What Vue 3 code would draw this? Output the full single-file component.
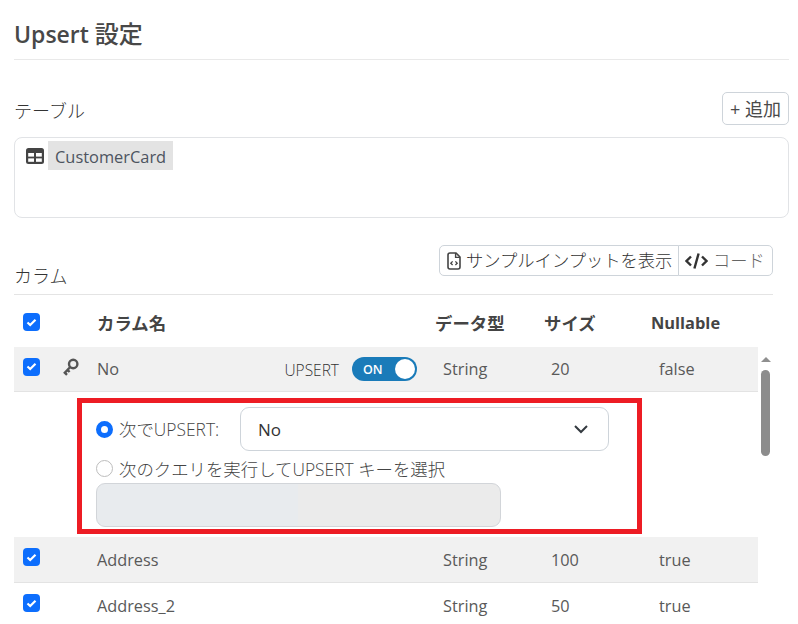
<script setup>
const after = [
  { name: 'Address', type: 'String', size: '100', nullable: 'true', shaded: true },
  { name: 'Address_2', type: 'String', size: '50', nullable: 'true', shaded: false },
]
</script>

<template>
  <main class="page">
    <h1 class="title">Upsert <span class="title-ja">設定</span></h1>

    <section class="table-section">
      <div class="section-head">
        <span class="label">テーブル</span>
        <button class="btn add">+ 追加</button>
      </div>
      <div class="table-box">
        <svg class="table-icon" width="18" height="16" viewBox="0 0 18 16">
          <rect x="0" y="0" width="18" height="16" rx="2.5" fill="#444" />
          <rect x="2.2" y="5" width="5.8" height="3.6" fill="#fff" />
          <rect x="10" y="5" width="5.8" height="3.6" fill="#fff" />
          <rect x="2.2" y="10.4" width="5.8" height="3.4" fill="#fff" />
          <rect x="10" y="10.4" width="5.8" height="3.4" fill="#fff" />
        </svg>
        <span class="chip">CustomerCard</span>
      </div>
    </section>

    <section class="columns">
      <div class="columns-head">
        <span class="label">カラム</span>
        <div class="btn-group">
          <button class="btn seg">
            <svg width="14" height="18" viewBox="0 0 14 18" fill="none">
              <path d="M1 3a2 2 0 0 1 2-2h6l4 4v10a2 2 0 0 1-2 2H3a2 2 0 0 1-2-2z" stroke="#444" stroke-width="1.6" />
              <path d="M8.6 1v4.4H13" stroke="#444" stroke-width="1.4" />
              <path d="M5.6 9.4 3.8 11.2l1.8 1.8M8.4 9.4l1.8 1.8L8.4 13" stroke="#444" stroke-width="1.3" />
            </svg>
            <span class="seg-text">サンプルインプットを表示</span>
          </button>
          <button class="btn seg last">
            <svg class="code" width="23" height="18" viewBox="0 0 23 18" fill="none">
              <path d="M6 4.5 1.5 9 6 13.5M17 4.5 21.5 9 17 13.5M13.6 1.5 9.4 16.5" stroke="#333" stroke-width="2.4" />
            </svg>
            <span class="seg-text">コード</span>
          </button>
        </div>
      </div>

      <div class="grid-wrap">
        <div class="row header">
          <span class="check"><svg width="11" height="9" viewBox="0 0 11 9"><path d="M1.5 4.5 4.2 7 9.5 1.7" fill="none" stroke="#fff" stroke-width="2.2" /></svg></span>
          <span></span>
          <span class="cell-name">カラム名</span>
          <span>データ型</span>
          <span>サイズ</span>
          <span class="head-latin">Nullable</span>
        </div>

        <div class="body">
          <div class="row data shaded first-row">
            <span class="check"><svg width="11" height="9" viewBox="0 0 11 9"><path d="M1.5 4.5 4.2 7 9.5 1.7" fill="none" stroke="#fff" stroke-width="2.2" /></svg></span>
            <svg class="key" width="18" height="18" viewBox="0 0 18 18" fill="none">
              <circle cx="11.2" cy="6" r="4.2" stroke="#555" stroke-width="2.4" />
              <path d="M8 9.2 2 15.6M2.6 14.4l2.4 2.4M5.4 11.8l2.2 2.2" stroke="#555" stroke-width="2.4" />
            </svg>
            <span class="cell-name upsert-cell">
              <span>No</span>
              <span class="upsert">
                <span class="upsert-label">UPSERT</span>
                <span class="toggle"><span class="toggle-text">ON</span><span class="knob"></span></span>
              </span>
            </span>
            <span class="val">String</span>
            <span class="val num">20</span>
            <span class="val num">false</span>
          </div>

          <div class="expand">
            <div class="red-box">
              <div class="opt first">
                <span class="radio on"></span>
                <span class="opt-text">次でUPSERT:</span>
                <div class="select">
                  <span>No</span>
                  <svg width="16" height="10" viewBox="0 0 16 10" fill="none"><path d="M2 2l6 6 6-6" stroke="#343a40" stroke-width="2" /></svg>
                </div>
              </div>
              <div class="opt second">
                <span class="radio"></span>
                <span class="opt-text">次のクエリを実行してUPSERT キーを選択</span>
              </div>
              <div class="query"></div>
            </div>
          </div>

          <div v-for="r in after" :key="r.name" class="row data" :class="{ shaded: r.shaded }">
            <span class="check"><svg width="11" height="9" viewBox="0 0 11 9"><path d="M1.5 4.5 4.2 7 9.5 1.7" fill="none" stroke="#fff" stroke-width="2.2" /></svg></span>
            <span></span>
            <span class="cell-name">{{ r.name }}</span>
            <span class="val">{{ r.type }}</span>
            <span class="val num">{{ r.size }}</span>
            <span class="val num">{{ r.nullable }}</span>
          </div>

          <div class="scrollbar">
            <span class="arrow"></span>
            <span class="thumb"></span>
          </div>
        </div>
      </div>
    </section>
  </main>
</template>

<style>
html, body { margin: 0; height: 624px; overflow: hidden; background: #fff; }
</style>

<style scoped>
.page {
  box-sizing: border-box;
  width: 798px;
  height: 624px;
  overflow: hidden;
  padding: 0 9px 0 14px;
  font-family: "Open Sans", "Noto Sans CJK JP", sans-serif;
  font-size: 16px;
  color: #4a4a4a;
}
.title {
  margin: 0;
  height: 60px;
  box-sizing: border-box;
  padding-top: 15px;
  border-bottom: 1px solid #e9e9e9;
  font-size: 23px;
  line-height: 38px;
  font-weight: 600;
  color: #484848;
}
.title-ja { font-size: 24px; font-weight: 500; }
.table-section { margin-top: 32px; }
.section-head { display: flex; justify-content: space-between; align-items: center; height: 33px; }
.section-head .label { margin-top: 5px; }
.label { font-size: 18px; line-height: 28px; color: #333; font-weight: 300; }
.btn {
  box-sizing: border-box;
  background: #fff;
  border: 1px solid #ced4da;
  font-family: inherit;
  font-size: 17.3px;
  color: #4a4a4a;
  padding: 0;
}
.add { width: 67px; height: 33px; border-radius: 5px; font-size: 18px; padding-bottom: 2px; }
.table-box {
  box-sizing: border-box;
  margin-top: 12px;
  height: 81px;
  border: 1px solid #e1e3e6;
  border-radius: 8px;
  padding: 3px 0 0 11px;
  display: flex;
  align-items: flex-start;
  gap: 4px;
}
.table-icon { margin-top: 7px; }
.chip {
  background: #e3e3e3;
  height: 29px;
  line-height: 32px;
  padding: 0 7px;
  font-size: 16.4px;
  color: #4d5460;
}
.columns { margin-top: 27px; width: 759px; }
.columns-head {
  height: 49px;
  display: flex;
  justify-content: space-between;
  align-items: flex-start;
  border-bottom: 1px solid #e4e4e4;
}
.columns-head .label { margin-top: 17px; }
.btn-group { display: flex; }
.seg {
  height: 31px;
  display: flex;
  align-items: center;
  gap: 5px;
  width: 240px;
  padding-left: 7px;
  border-radius: 5px 0 0 5px;
  white-space: nowrap;
  overflow: hidden;
}
.seg-text { margin-top: -3px; font-weight: 300; color: #333; }
.seg.last {
  width: 95px;
  margin-left: -1px;
  padding-left: 6px;
  gap: 5px;
  border-radius: 0 5px 5px 0;
}
.seg.last .seg-text { color: #666; }
.grid-wrap { width: 759px; }
.row {
  display: grid;
  grid-template-columns: 39px 35px 338px 109px 108px 1fr;
  align-items: center;
  padding-left: 9px;
  box-sizing: border-box;
}
.header {
  height: 52px;
  font-weight: 700;
  font-size: 17.4px;
  color: #444;
}
.header .check { margin-top: 2px; }
.header span:not(.check) { margin-top: 2px; }
.header .head-latin { font-size: 16.4px; margin-left: -1px; }
.check {
  width: 17px;
  height: 18px;
  background: #0d6efd;
  border-radius: 4px;
  display: flex;
  align-items: center;
  justify-content: center;
}
.body { position: relative; height: 290px; width: 759px; }
.data {
  width: 744px;
  height: 46px;
  font-size: 16.3px;
  color: #595959;
  border-bottom: 1px solid #e3e3e3;
}
.first-row { height: 45px; }
.data .check { margin-top: -5px; }
.key { margin-top: -4px; }
.shaded { background: #f1f1f1; }
.data > .val { padding-left: 8px; }
.data > .val.num { padding-left: 7px; }
.upsert-cell { display: flex; justify-content: space-between; align-items: center; padding-right: 18px; }
.upsert { display: flex; align-items: center; gap: 13px; }
.upsert-label { font-size: 15.5px; font-weight: 300; color: #333; margin-top: 2px; }
.toggle {
  position: relative;
  width: 65px;
  height: 24px;
  border-radius: 12px;
  background: #1a7bb9;
  color: #fff;
  font-size: 12.5px;
  font-weight: 600;
  line-height: 25px;
  padding-left: 11px;
  box-sizing: border-box;
}
.knob {
  position: absolute;
  right: 2px;
  top: 2px;
  width: 20px;
  height: 20px;
  border-radius: 50%;
  background: #fff;
}
.expand { height: 145px; box-sizing: border-box; padding: 6px 0 0 63px; width: 744px; }
.red-box {
  box-sizing: border-box;
  width: 565px;
  height: 136px;
  border: 5px solid #ed1c24;
  padding: 4px 0 0 14px;
}
.opt { display: flex; align-items: center; }
.first { height: 44px; }
.second { height: 30px; margin-top: 2px; }
.radio {
  box-sizing: border-box;
  width: 17px;
  height: 17px;
  border-radius: 50%;
  border: 1px solid #bdbdbd;
  background: #fff;
  flex: none;
}
.radio.on { border: 5px solid #0d6efd; }
.opt-text { margin-left: 6px; font-size: 17.4px; font-weight: 300; color: #444; white-space: nowrap; }
.first .opt-text { width: 121px; margin-top: -2px; }
.select {
  box-sizing: border-box;
  width: 369px;
  height: 44px;
  border: 1px solid #ced4da;
  border-radius: 9px;
  display: flex;
  align-items: center;
  justify-content: space-between;
  padding: 0 19px 0 17px;
  font-size: 17px;
  color: #333;
}
.query {
  box-sizing: border-box;
  width: 405px;
  height: 44px;
  border: 1px solid #d2d5d9;
  border-radius: 9px;
  background: linear-gradient(to right, #e8ebee 50%, #ebebeb 50%);
}
.scrollbar {
  position: absolute;
  left: 747px;
  top: 0;
  width: 10px;
  height: 110px;
}
.arrow {
  position: absolute;
  top: 10px;
  left: 0;
  border-left: 5px solid transparent;
  border-right: 5px solid transparent;
  border-bottom: 5px solid #8f8f8f;
}
.thumb {
  position: absolute;
  top: 23px;
  left: 0;
  width: 9px;
  height: 86px;
  border-radius: 5px;
  background: #8c8c8c;
}
</style>
